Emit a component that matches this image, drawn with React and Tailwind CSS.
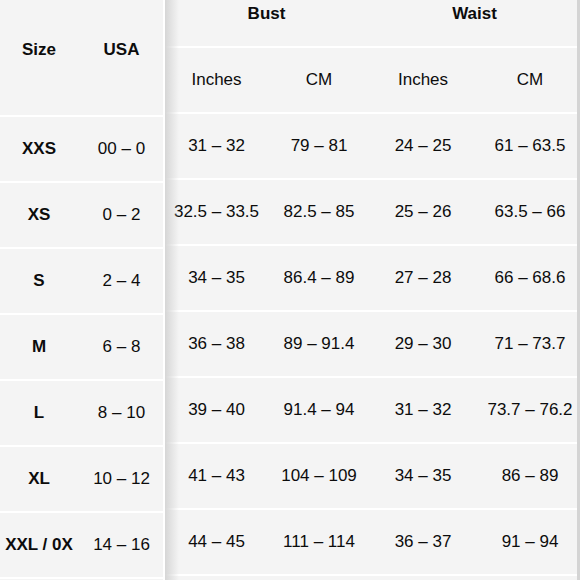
import React from "react";

const rows = [
  ["XXS", "00 – 0", "31 – 32", "79 – 81", "24 – 25", "61 – 63.5"],
  ["XS", "0 – 2", "32.5 – 33.5", "82.5 – 85", "25 – 26", "63.5 – 66"],
  ["S", "2 – 4", "34 – 35", "86.4 – 89", "27 – 28", "66 – 68.6"],
  ["M", "6 – 8", "36 – 38", "89 – 91.4", "29 – 30", "71 – 73.7"],
  ["L", "8 – 10", "39 – 40", "91.4 – 94", "31 – 32", "73.7 – 76.2"],
  ["XL", "10 – 12", "41 – 43", "104 – 109", "34 – 35", "86 – 89"],
  ["XXL / 0X", "14 – 16", "44 – 45", "111 – 114", "36 – 37", "91 – 94"],
];

const Line = () => <div className="h-[2px] bg-white shrink-0" />;

export default function App() {
  return (
    <div
      className="relative w-[580px] h-[580px] overflow-hidden bg-[#f4f4f4] text-[#0c0c0c] text-[17px] leading-[20px] flex"
      style={{ fontFamily: '"Liberation Sans", Arial, sans-serif' }}
    >
      {/* Left frozen columns */}
      <div className="w-[163px] shrink-0 flex flex-col">
        <div className="h-[115px] shrink-0 flex font-bold pt-[40px]">
          <div className="w-[78px] text-center">Size</div>
          <div className="w-[85px] text-center pl-[2px]">USA</div>
        </div>
        <Line />
        {rows.map((r, i) => (
          <React.Fragment key={i}>
            <div className="h-[64px] shrink-0 flex items-center">
              <div className="w-[78px] text-center font-bold">{r[0]}</div>
              <div className="w-[85px] text-center pl-[2px]">{r[1]}</div>
            </div>
            <Line />
          </React.Fragment>
        ))}
      </div>
      <div className="w-[2px] shrink-0 bg-white" />

      {/* Right scrolling columns */}
      <div className="w-[412px] shrink-0 flex flex-col">
        <div className="h-[46px] shrink-0 flex font-bold pt-[4px]">
          <div className="w-[203px] text-center">Bust</div>
          <div className="w-[209px] text-center pl-[4px]">Waist</div>
        </div>
        <Line />
        <div className="h-[64px] shrink-0 flex items-center">
          <div className="w-[103px] text-center">Inches</div>
          <div className="w-[102px] text-center">CM</div>
          <div className="w-[106px] text-center">Inches</div>
          <div className="w-[101px] text-center pl-[7px]">CM</div>
        </div>
        <Line />
        {rows.map((r, i) => (
          <React.Fragment key={i}>
            <div className="h-[64px] shrink-0 flex items-center">
              <div className="w-[103px] text-center whitespace-nowrap">{r[2]}</div>
              <div className="w-[102px] text-center whitespace-nowrap">{r[3]}</div>
              <div className="w-[106px] text-center whitespace-nowrap">{r[4]}</div>
              <div className="w-[101px] text-center whitespace-nowrap pl-[7px]">{r[5]}</div>
            </div>
            <Line />
          </React.Fragment>
        ))}
      </div>
      <div className="w-[3px] shrink-0 bg-[#d4d4d4]" />

      {/* shadow of frozen columns */}
      <div className="absolute top-0 bottom-0 left-[165px] w-[14px] bg-gradient-to-r from-[#d6d6d6] to-[#f4f4f4]/0" />
    </div>
  );
}
